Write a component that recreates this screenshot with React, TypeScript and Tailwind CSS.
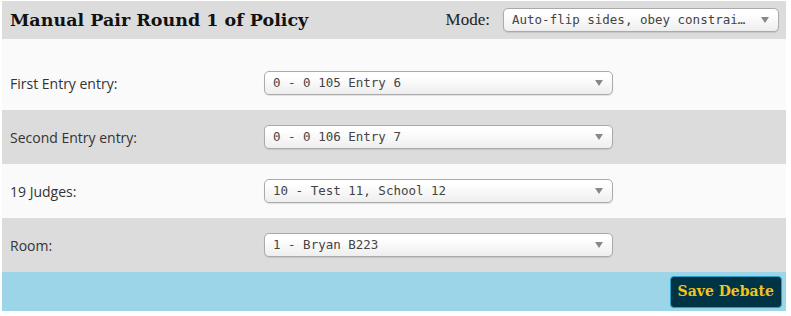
import React from "react";

const rows = [
  { label: "First Entry entry:", value: "0 - 0 105 Entry 6", shade: false },
  { label: "Second Entry entry:", value: "0 - 0 106 Entry 7", shade: true },
  { label: "19 Judges:", value: "10 - Test 11, School 12", shade: false },
  { label: "Room:", value: "1 - Bryan B223", shade: true },
];

const Select: React.FC<{ value: string; className?: string }> = ({ value, className }) => (
  <div
    className={
      "flex items-center h-[24px] rounded-[5px] border border-[#aaaaaa] bg-gradient-to-b from-white from-20% to-[#eeeeee] pl-[8px] pr-[9px] shadow-[0_1px_1px_rgba(0,0,0,0.1)] " +
      (className ?? "")
    }
  >
    <span className="flex-1 whitespace-nowrap font-['DejaVu_Sans_Mono',monospace] text-[12.5px] text-[#444444]">
      {value}
    </span>
    <span className="ml-2 w-0 h-0 border-l-[4px] border-r-[4px] border-t-[6px] border-l-transparent border-r-transparent border-t-[#888888]" />
  </div>
);

export default function App() {
  return (
    <div className="bg-white min-h-[316px] pt-[1px]">
      <div className="ml-[2px] w-[784px]">
        {/* Header */}
        <div className="flex items-center h-[38px] bg-[#dcdcdc] pl-[8px] pr-[7px]">
          <h1 className="flex-1 font-['DejaVu_Serif',serif] font-bold text-[17.5px] text-[#111111]">
            Manual Pair Round 1 of Policy
          </h1>
          <span className="font-['Liberation_Serif',serif] text-[17px] text-[#222222] mr-[13px]">Mode:</span>
          <Select value="Auto-flip sides, obey constrai…" className="w-[276px]" />
        </div>

        <div className="h-[17px] bg-[#fafafa]" />

        {rows.map((row, i) => (
          <div
            key={i}
            className={
              "flex items-center h-[54px] pl-[8px] " + (row.shade ? "bg-[#dcdcdc]" : "bg-[#fafafa]")
            }
          >
            <span className="w-[254px] font-['Open_Sans',sans-serif] text-[14px] text-[#333333]">
              {row.label}
            </span>
            <Select value={row.value} className="w-[349px]" />
          </div>
        ))}

        {/* Footer */}
        <div className="flex items-center justify-end h-[39px] bg-[#9dd5e8] pr-[4px]">
          <button className="h-[32px] px-[7px] rounded-[4px] border border-[#2aa0c8] bg-[#003344] font-['DejaVu_Serif',serif] font-bold text-[14px] text-[#f5c21b]">
            Save Debate
          </button>
        </div>
      </div>
    </div>
  );
}
